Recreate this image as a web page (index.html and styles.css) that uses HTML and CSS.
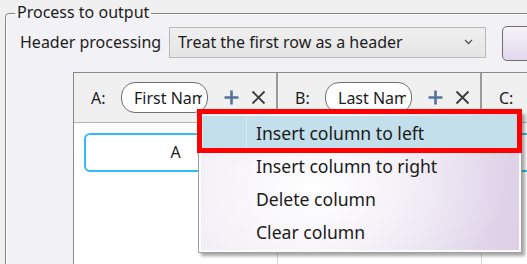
FILE: index.html
```html
<!DOCTYPE html>
<html>
<head>
<meta charset="utf-8">
<link rel="stylesheet" href="styles.css">
</head>
<body>
<fieldset class="group">
  <legend class="group-title">Process to output</legend>
  <div class="hp-row">
    <span class="hp-label">Header processing</span>
    <div class="combo">
      <span class="combo-text">Treat the first row as a header</span>
      <svg class="chev" width="9" height="6" viewBox="0 0 9 6"><path d="M1 1 L4.5 4.5 L8 1" fill="none" stroke="#555" stroke-width="1.3"/></svg>
    </div>
    <div class="btn"></div>
  </div>
  <div class="grid">
    <div class="grid-head">
      <div class="col-head">
        <span class="col-letter">A:</span>
        <span class="pill"><span class="pill-text">First Name</span></span>
        <svg class="ic-plus" width="15" height="15" viewBox="0 0 15 15"><path d="M7.5 0.5 V14.5 M0.5 7.5 H14.5" stroke="#55739a" stroke-width="2.6" fill="none"/></svg>
        <svg class="ic-x" width="15" height="15" viewBox="0 0 15 15"><path d="M1.5 1.5 L13.5 13.5 M13.5 1.5 L1.5 13.5" stroke="#3c3c3c" stroke-width="1.9" fill="none"/></svg>
      </div>
      <div class="col-head">
        <span class="col-letter">B:</span>
        <span class="pill"><span class="pill-text">Last Name</span></span>
        <svg class="ic-plus" width="15" height="15" viewBox="0 0 15 15"><path d="M7.5 0.5 V14.5 M0.5 7.5 H14.5" stroke="#55739a" stroke-width="2.6" fill="none"/></svg>
        <svg class="ic-x" width="15" height="15" viewBox="0 0 15 15"><path d="M1.5 1.5 L13.5 13.5 M13.5 1.5 L1.5 13.5" stroke="#3c3c3c" stroke-width="1.9" fill="none"/></svg>
      </div>
      <div class="col-head">
        <span class="col-letter">C:</span>
      </div>
    </div>
    <div class="grid-body">
      <div class="col-body"><div class="cell">A</div></div>
      <div class="col-body"><div class="cell"></div></div>
      <div class="col-body"><div class="cell"></div></div>
    </div>
  </div>
</fieldset>

<div class="menu">
  <div class="menu-item active"><span class="menu-icon"></span><span class="menu-label">Insert column to left</span></div>
  <div class="menu-item"><span class="menu-icon"></span><span class="menu-label">Insert column to right</span></div>
  <div class="menu-item"><span class="menu-icon"></span><span class="menu-label">Delete column</span></div>
  <div class="menu-item"><span class="menu-icon"></span><span class="menu-label">Clear column</span></div>
</div>
<div class="callout"></div>
</body>
</html>
```

FILE: styles.css
```css
html, body {
  margin: 0;
  padding: 0;
}
body {
  width: 527px;
  height: 264px;
  overflow: hidden;
  background: #f0f0f0;
  font-family: "Noto Sans", "Open Sans", sans-serif;
  font-size: 16px;
  color: #1c1c1c;
  padding-top: 3px;
  box-sizing: border-box;
  position: relative;
}
.group {
  margin: 0 0 0 5px;
  padding: 4px 0 0 9px;
  width: 640px;
  height: 320px;
  box-sizing: border-box;
  border: 1px solid #858585;
  border-radius: 4px;
  box-shadow: inset 1px 1px 0 #ffffff;
  background: #f2f1f5;
}
.group-title {
  padding: 0 2px;
  line-height: 18px;
  height: 20px;
  font-size: 16px;
}
.hp-row {
  display: flex;
  align-items: flex-start;
  height: 31px;
  padding-left: 5px;
}
.hp-label {
  width: 149px;
  flex: none;
  line-height: 31px;
}
.combo {
  width: 317px;
  height: 31px;
  box-sizing: border-box;
  border: 1px solid #b9b9b9;
  background: linear-gradient(#efefef, #e5e5e5);
  display: flex;
  align-items: center;
  padding-left: 8px;
  padding-right: 12px;
  flex: none;
}
.combo-text {
  flex: 1;
  line-height: 29px;
}
.chev {
  display: block;
  margin-top: -2px;
}
.btn {
  margin-left: 16px;
  margin-top: -1px;
  width: 60px;
  height: 35px;
  box-sizing: border-box;
  border: 1px solid #6e6e6e;
  border-radius: 5px;
  background: linear-gradient(#f6f3f9, #e2d8ec);
  flex: none;
}
.grid {
  margin: 14px 0 0 58px;
  border-top: 1px solid #8a8a8a;
  border-left: 1px solid #8a8a8a;
  background: #ffffff;
  height: 260px;
}
.grid-head {
  display: grid;
  grid-template-columns: 204px 204px 204px;
  height: 50px;
  box-sizing: border-box;
  border-bottom: 1px solid #b4b4b4;
  background: #f0f0f0;
}
.col-head {
  display: flex;
  align-items: center;
  padding-left: 17px;
  border-right: 2px solid #9a9a9a;
  box-sizing: border-box;
}
.col-letter {
  width: 30px;
  flex: none;
}
.pill {
  width: 87px;
  height: 31px;
  box-sizing: border-box;
  border: 1.5px solid #707070;
  border-radius: 14px;
  background: #ffffff;
  padding-left: 12px;
  padding-right: 5px;
  overflow: hidden;
  display: flex;
  align-items: center;
  flex: none;
}
.pill-text {
  white-space: nowrap;
  overflow: hidden;
  line-height: 28px;
}
.ic-plus {
  margin-left: 16px;
  display: block;
  flex: none;
}
.ic-x {
  margin-left: 12px;
  display: block;
  flex: none;
}
.grid-body {
  display: grid;
  grid-template-columns: 204px 204px 204px;
}
.col-body {
  border-right: 1px solid #d4d4d4;
  padding: 10px 10px 0 10px;
  height: 200px;
}
.cell {
  height: 39px;
  box-sizing: border-box;
  border: 2px solid #33bdf2;
  border-radius: 6px;
  text-align: center;
  line-height: 35px;
}
.menu {
  position: absolute;
  left: 198px;
  top: 111px;
  width: 324px;
  height: 142px;
  box-sizing: border-box;
  border: 1px solid #a0a0a0;
  padding: 4px 4px;
  background:
    radial-gradient(ellipse 60% 90% at 35% 55%, rgba(255,255,255,0.95), rgba(255,255,255,0) 100%),
    linear-gradient(100deg, #ece7f2 0%, #f1edf5 40%, #dccfe7 100%);
  box-shadow: inset 0 0 0 2px #fbfbfb, 3px 3px 3px rgba(0,0,0,0.35);
  font-size: 17.6px;
}
.menu-item {
  display: flex;
  align-items: center;
  height: 33px;
  color: #1a1a1a;
}
.menu-item.active {
  background: #c2dfeb;
}
.menu-icon {
  width: 44px;
  height: 100%;
  flex: none;
  box-sizing: border-box;
}
.menu-item.active .menu-icon {
  border-right: 1px solid #d8ecf4;
}
.menu-label {
  padding-left: 9px;
  white-space: nowrap;
}
.callout {
  position: absolute;
  left: 197px;
  top: 109px;
  width: 325px;
  height: 44px;
  box-sizing: border-box;
  border: 5px solid #ff0000;
}
```
